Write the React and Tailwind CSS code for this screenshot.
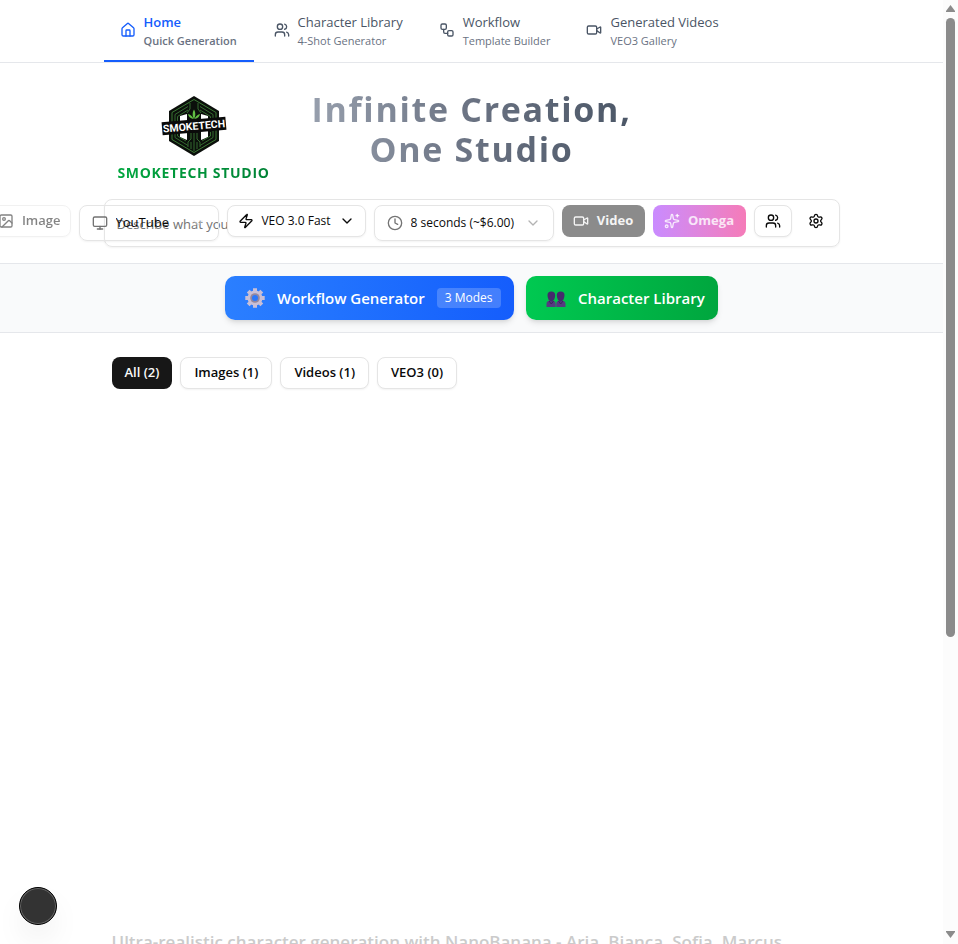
import {
  House, Users, Workflow, Video, Image, Monitor, Zap, ChevronDown, Clock, Sparkles, Settings,
} from "lucide-react";

const tabs = [
  { icon: House, title: "Home", sub: "Quick Generation", active: true },
  { icon: Users, title: "Character Library", sub: "4-Shot Generator" },
  { icon: Workflow, title: "Workflow", sub: "Template Builder" },
  { icon: Video, title: "Generated Videos", sub: "VEO3 Gallery" },
];

const filters = ["All (2)", "Images (1)", "Videos (1)", "VEO3 (0)"];

function Logo() {
  return (
    <svg viewBox="0 0 66 62" className="h-[62px] w-[66px]" role="img" aria-label="Smoketech">
      <path d="M33 1 58 16V46L33 61 8 46V16Z" fill="#0b0f0b" />
      <path d="M33 4.500 55 17.500V44.500L33 57.500 11 44.500V17.500Z" fill="none" stroke="#3c7a35" strokeWidth="1" />
      <path d="M26 19V45L19 42V21ZM40 19V45L47 42V21Z" fill="#fff" />
      <g fill="none" stroke="#356b30" strokeWidth="1">
        <path d="M14 27V19.500L27 11.500M16.500 27V21.500L27 15M52 27V19.500L39 11.500M49.500 27V21.500L39 15" />
        <path d="M14 36V42.500L27 50.500M16.500 37V41L25 46M52 36V42.500L39 50.500M49.500 37V41L41 46" />
        <path d="M29 8V14L26 18M37 8V14L40 18M33 38V56M30 38V44L27 47V52M36 38V44L39 47V52M30 47V54M36 47V54" />
      </g>
      <path d="M33 24C31 21 31.500 17 33 14.500 34.500 17 35 21 33 24ZM32.500 24C29 23.500 27.500 21.500 27 19 30 20 31.500 21.500 32.500 24ZM33.500 24C37 23.500 38.500 21.500 39 19 36 20 34.500 21.500 33.500 24Z" fill="#62c044" />
      <g transform="rotate(-5 33 31)">
        <rect x="1" y="24.500" width="64" height="13" fill="#0a0a0a" />
        <text x="33" y="34.800" textAnchor="middle" fill="#fff" fontFamily="Roboto, sans-serif" fontWeight="700" fontSize="10.500">SMOKETECH</text>
      </g>
    </svg>
  );
}

function GearEmoji() {
  return (
    <svg viewBox="0 0 20 20" className="size-5" aria-hidden="true">
      <g stroke="#c8bfd6" strokeWidth="4">
        <path d="M10 .300V19.700M.300 10H19.700M3.200 3.200 16.800 16.800M16.800 3.200 3.200 16.800" />
      </g>
      <circle cx="10" cy="10" r="7.500" fill="#c8bfd6" />
      <circle cx="10" cy="10" r="4.800" fill="#93889f" />
      <circle cx="10" cy="10" r="3" fill="#2b78fa" />
    </svg>
  );
}

function PeopleEmoji() {
  return (
    <svg viewBox="0 0 20 20" className="size-5" aria-hidden="true">
      <path d="M.5 19V16Q.5 13 3.500 12.500H7Q9.700 13 9.700 16V19ZM10.300 19V16Q10.300 13 13 12.500H16.500Q19.500 13 19.500 16V19Z" fill="#563a80" />
      <path d="M1.500 7Q1.500 3.500 5.300 3.500T9.200 7Q9.200 12.500 5.300 13.500 1.500 12.500 1.500 7ZM10.800 7Q10.800 3.500 14.700 3.500T18.500 7Q18.500 12.500 14.700 13.500 10.800 12.500 10.800 7Z" fill="#452a6c" />
      <path d="M3 13 5.300 16 7.500 13M12.500 13 14.700 16 17 13" fill="none" stroke="#3a225c" />
    </svg>
  );
}

function PromptBar() {
  return (
    <form className="relative h-12 rounded-lg border border-neutral-200 shadow-xs" onSubmit={(e) => e.preventDefault()}>
      <input
        aria-label="Prompt"
        placeholder="Describe what you want"
        className="h-full w-full rounded-lg bg-transparent px-3 pt-[2px] text-[13px] outline-none placeholder:text-neutral-500"
      />
      <div className="absolute top-[5px] right-[7px] flex items-start gap-2 text-[12px] font-medium whitespace-nowrap text-neutral-950">
        <button type="button" className="flex h-8 w-[91px] items-center justify-end gap-2 rounded-lg border border-neutral-200 bg-white pr-[9px] text-[13px] font-semibold opacity-50 shadow-xs">
          <Image className="size-4" />
          Image
        </button>
        <label className="flex h-9 w-[140px] items-center rounded-lg border border-neutral-200 px-3 text-[13px] shadow-xs">
          <Monitor className="size-4 shrink-0 text-neutral-500" />
          <select aria-label="Platform" className="ml-2 min-w-0 flex-1 appearance-none bg-transparent outline-none">
            <option>YouTube</option>
          </select>
          <ChevronDown className="size-4 shrink-0 text-neutral-300 opacity-50" />
        </label>
        <button type="button" className="flex h-8 w-[139px] items-center justify-between rounded-lg border border-neutral-200 bg-white px-[10px] shadow-xs">
          <Zap className="size-4" />
          VEO 3.0 Fast
          <ChevronDown className="size-4" />
        </button>
        <label className="flex h-9 w-[180px] items-center rounded-lg border border-neutral-200 px-3 font-normal shadow-xs">
          <Clock className="size-4 shrink-0 text-neutral-500" />
          <select aria-label="Duration" className="ml-2 min-w-0 flex-1 appearance-none bg-transparent outline-none">
            <option>8 seconds (~$6.00)</option>
          </select>
          <ChevronDown className="size-4 shrink-0 text-neutral-400 opacity-80" />
        </label>
        <button type="button" className="flex h-8 w-[83px] items-center justify-center gap-2 rounded-lg bg-[#8b8b8b] text-[13px] font-bold text-neutral-100">
          <Video className="size-4" />
          Video
        </button>
        <button type="button" className="flex h-8 w-[93px] items-center justify-center gap-2 rounded-lg bg-linear-to-r from-[#c98bff] to-[#f57bb8] text-[13px] font-bold text-white/80">
          <Sparkles className="size-4" />
          Omega
        </button>
        <button type="button" aria-label="Characters" className="flex h-8 w-[38px] items-center justify-center rounded-lg border border-neutral-200 bg-white shadow-xs">
          <Users className="size-4" />
        </button>
        <button type="button" aria-label="Settings" className="flex size-8 items-center justify-center">
          <Settings className="size-4" />
        </button>
      </div>
    </form>
  );
}

export default function App() {
  return (
    <div className="flex h-screen overflow-hidden bg-white font-['Open_Sans','Noto_Sans',sans-serif] text-neutral-950">
      <div className="min-w-0 flex-1 overflow-hidden">
        <nav className="border-b border-gray-200">
          <div className="mx-auto flex max-w-3xl gap-5 px-4">
            {tabs.map(({ icon: Icon, title, sub, active }) => (
              <a
                key={title}
                href="#"
                className={
                  active
                    ? "flex h-[62px] w-[150px] items-center gap-2 border-b-2 border-blue-600 pl-4 font-semibold text-blue-600"
                    : "flex h-[62px] items-center gap-2 border-b-2 border-transparent pr-4 text-gray-600"
                }
              >
                <Icon className="size-4 shrink-0" />
                <span className="whitespace-nowrap">
                  <span className="block text-[13px] leading-[22px]">{title}</span>
                  <span className="block text-[11px] leading-4 text-gray-500">{sub}</span>
                </span>
              </a>
            ))}
          </div>
        </nav>

        <header className="mx-auto max-w-3xl px-4 pt-6 pb-4">
          <div className="grid grid-cols-[1fr_336px_1fr] items-start">
            <div className="flex w-[180px] flex-col items-center pt-2">
              <Logo />
              <span className="mt-1.5 bg-linear-to-r from-green-600 to-green-700 bg-clip-text text-[14px] leading-5 font-bold tracking-wider whitespace-nowrap text-transparent">
                SMOKETECH STUDIO
              </span>
            </div>
            <h1 className="bg-linear-to-r from-gray-400 via-gray-500 to-gray-600 bg-clip-text pt-0.5 text-center text-[34px] leading-10 font-bold tracking-wider text-transparent">
              Infinite Creation, One Studio
            </h1>
          </div>
          <div className="mt-4">
            <PromptBar />
          </div>
        </header>

        <section className="flex justify-center gap-3 border-y border-gray-200 bg-gray-50 py-3 text-[15px] font-semibold text-white">
          <button type="button" className="flex h-11 w-[289px] items-center gap-3 rounded-[10px] bg-linear-to-r from-[#2b7fff] to-[#155dfc] pl-5 whitespace-nowrap shadow-md">
            <GearEmoji />
            Workflow Generator
            <span className="rounded-sm bg-white/20 px-2 text-[12px] leading-5 font-normal">3 Modes</span>
          </button>
          <button type="button" className="flex h-11 w-[192px] items-center gap-3 rounded-[10px] bg-linear-to-r from-[#00c951] to-[#00a63e] pl-5 whitespace-nowrap shadow-md">
            <PeopleEmoji />
            Character Library
          </button>
        </section>

        <main className="mx-auto max-w-3xl px-6 pt-6">
          <div className="flex gap-2 text-[13px] font-semibold">
            {filters.map((f, i) => (
              <button
                key={f}
                type="button"
                className={
                  i === 0
                    ? "h-8 rounded-lg bg-neutral-900 px-[13px] text-neutral-50"
                    : "h-8 rounded-lg border border-neutral-200 bg-white px-[13px] shadow-xs"
                }
              >
                {f}
              </button>
            ))}
          </div>
          <p className="mt-[539px] text-[17px] leading-7 font-semibold whitespace-nowrap text-[#cbcbcb]">
            Ultra-realistic character generation with NanoBanana - Aria, Bianca, Sofia, Marcus
          </p>
        </main>
      </div>

      <div className="flex w-[15px] shrink-0 flex-col items-center bg-[#fcfcfc] py-[5px]" aria-hidden="true">
        <svg viewBox="0 0 9 8" className="h-2 w-[9px]"><path d="M4.500 0 9 6V7H0V6Z" fill="#8b8b8b" /></svg>
        <div className="mt-[5px] h-[619px] w-[9px] rounded-full bg-[#8b8b8b]" />
        <svg viewBox="0 0 9 8" className="mt-auto h-2 w-[9px]"><path d="M4.500 7 9 1V0H0V1Z" fill="#8b8b8b" /></svg>
      </div>

      <button
        type="button"
        aria-label="Open tools"
        className="fixed bottom-[19px] left-[19px] size-[38px] rounded-full border border-black bg-[#333] shadow-[inset_0_0_0_1px_#666,0_16px_32px_-8px_rgba(0,0,0,0.15)]"
      />
    </div>
  );
}
